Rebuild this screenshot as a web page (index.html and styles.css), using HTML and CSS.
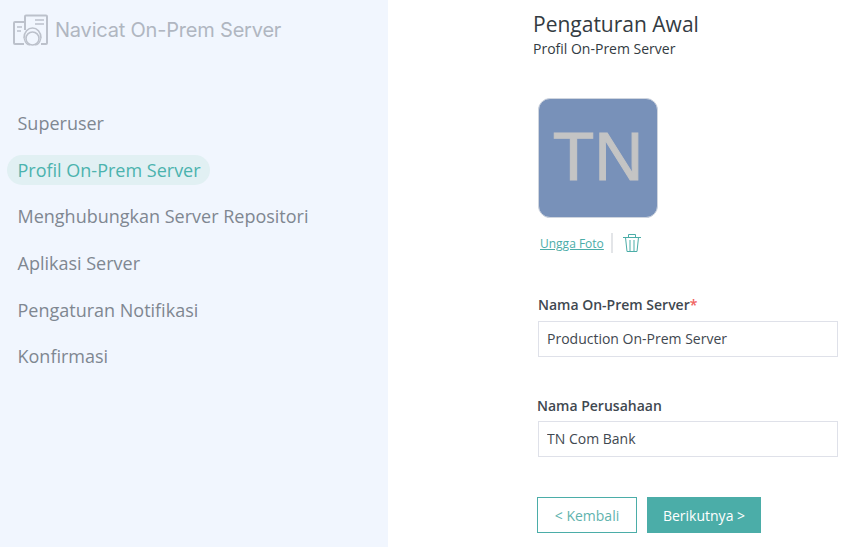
FILE: index.html
```html
<!DOCTYPE html>
<html lang="id">
<head>
<meta charset="utf-8">
<title>Pengaturan Awal</title>
<link rel="stylesheet" href="styles.css">
</head>
<body>
<div class="app">
  <aside class="sidebar">
    <div class="brand">
      <svg class="brand-icon" viewBox="0 0 36 32" width="36" height="32" fill="none" stroke="#bcc1cb" stroke-width="2">
        <path d="M11 8H2a1 1 0 0 0-1 1v20a1 1 0 0 0 1 1h9"/>
        <path d="M12 16V2.500a1 1 0 0 1 1-1h20a1 1 0 0 1 1 1V29a1 1 0 0 1-1 1h-5"/>
        <path d="M4 13h5M4 17h4M22 6h9M22 10h9" stroke-width="1.600"/>
        <path d="M11 24c0-6 4-10 8.500-10s8.500 4 8.500 10" stroke-width="1.600"/>
        <circle cx="19.500" cy="24.500" r="6.500" stroke-width="1.600"/>
        <path d="M11 24c1 4 3 7 6 7M28 24c-1 4-3 7-6 7" stroke-width="1.200"/>
      </svg>
      <span class="brand-name">Navicat On-Prem Server</span>
    </div>
    <nav class="steps">
      <div class="step">Superuser</div>
      <div class="step active">Profil On-Prem Server</div>
      <div class="step">Menghubungkan Server Repositori</div>
      <div class="step">Aplikasi Server</div>
      <div class="step">Pengaturan Notifikasi</div>
      <div class="step">Konfirmasi</div>
    </nav>
  </aside>
  <main class="main">
    <h1 class="title">Pengaturan Awal</h1>
    <p class="subtitle">Profil On-Prem Server</p>
    <div class="avatar-block">
      <div class="avatar">TN</div>
      <div class="avatar-actions">
        <a class="upload" href="#">Ungga Foto</a>
        <span class="divider"></span>
        <svg class="trash" viewBox="0 0 20 20" width="20" height="20" fill="none" stroke="#4bada8" stroke-width="1">
          <path d="M1 4.500h18M6.500 4.500V1.500h7v3M3.500 4.500l1.500 14h10l1.500-14M8 7v11M12 7v11"/>
        </svg>
      </div>
    </div>
    <div class="field first">
      <label class="label">Nama On-Prem Server<span class="req">*</span></label>
      <input class="input" type="text" value="Production On-Prem Server">
    </div>
    <div class="field second">
      <label class="label shifted">Nama Perusahaan</label>
      <input class="input" type="text" value="TN Com Bank">
    </div>
    <div class="buttons">
      <button class="btn btn-back">&lt; Kembali</button>
      <button class="btn btn-next">Berikutnya &gt;</button>
    </div>
  </main>
</div>
</body>
</html>
```
FILE: styles.css
```css
* { box-sizing: border-box; }
html, body { margin: 0; height: 100%; overflow: hidden; background: #fff; }
body { font-family: "Open Sans", "Liberation Sans", sans-serif; color: #3f4850; }
.app { display: flex; height: 547px; }
.sidebar { width: 388px; flex: none; background: #f1f6fe; padding: 14px 0 0 7px; }
.brand { display: flex; align-items: center; gap: 6px; height: 32px; padding-left: 6px; }
.brand-icon { flex: none; }
.brand-name { font-family: Inter, Roboto, sans-serif; font-size: 20px; font-weight: 400; letter-spacing: -0.2px; color: #b0b6c1; white-space: nowrap; }
.steps { display: flex; flex-direction: column; align-items: flex-start; margin-top: 62px; gap: 16.650px; }
.step { font-size: 18px; line-height: 30px; color: #7f8791; padding: 0 10.500px; border-radius: 15px; white-space: nowrap; }
.step.active { color: #4bb3ae; background: #e1f0f3; padding-right: 9.500px; }
.main { flex: 1; padding: 10px 0 0 145px; }
.title { margin: 0; font-size: 21px; font-weight: 400; line-height: 28px; color: #333b42; }
.subtitle { margin: 0; font-size: 14px; line-height: 22px; color: #333b42; }
.avatar-block { margin: 38px 0 0 5px; }
.avatar { width: 120px; height: 120px; border-radius: 12px; border: 1px solid #cfd5df; background: #7891b9; color: #c4c4c4; font-family: "Liberation Sans", Arial, sans-serif; font-size: 68px; line-height: 115px; text-align: center; -webkit-text-stroke: 1px #c4c4c4; }
.avatar-actions { display: flex; align-items: center; gap: 8px; margin: 15px 0 0 2px; height: 20px; }
.upload { font-size: 12px; color: #4bada8; text-decoration: underline; margin-right: -1px; }
.divider { width: 2px; height: 20px; background: #e3e5e8; }
.trash { margin-left: 1px; }
.field { margin-left: 5px; width: 300px; }
.field.first { margin-top: 42px; }
.field.second { margin-top: 39px; }
.label { display: block; font-size: 14px; font-weight: 600; line-height: 20px; color: #3f4850; margin-bottom: 6px; }
.label.shifted { margin-left: -1px; margin-bottom: 5px; }
.req { color: #f0625f; }
.input { display: block; width: 300px; height: 36px; border: 1px solid #dfe1e9; padding: 0 8px 2px; font-family: inherit; font-size: 14px; color: #3f4850; background: #fff; outline: none; }
.buttons { display: flex; gap: 10px; margin: 40px 0 0 4px; }
.btn { height: 36px; font-family: inherit; font-size: 14px; border-radius: 0; padding: 0; }
.btn-back { width: 100px; background: #fff; border: 1px solid #4bada8; color: #5fb3ae; }
.btn-next { width: 114px; background: #4bada8; border: 1px solid #4bada8; color: #fff; }
```
